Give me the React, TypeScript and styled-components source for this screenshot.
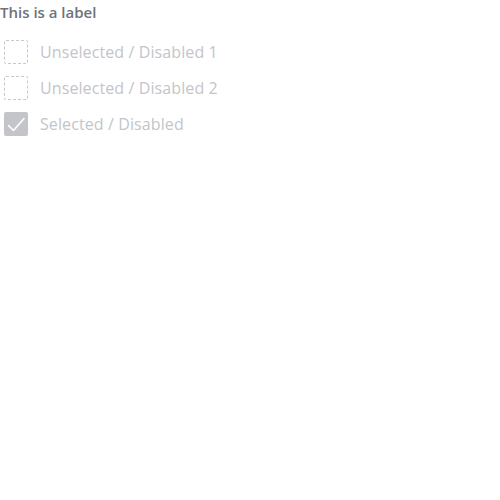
import React from "react";
import styled, { createGlobalStyle } from "styled-components";

const Global = createGlobalStyle`
  body { margin: 0; background: #fff; font-family: "Open Sans", sans-serif; }
`;

const Group = styled.div`
  display: flex;
  flex-direction: column;
`;

const Label = styled.div`
  font-size: 15px;
  font-weight: 600;
  line-height: 24px;
  color: #6e727a;
  margin-bottom: 10px;
`;

const Row = styled.label`
  display: flex;
  align-items: center;
  gap: 12px;
  height: 36px;
  padding-left: 4px;
`;

const Box = styled.span<{ $checked?: boolean }>`
  box-sizing: border-box;
  width: 24px;
  height: 24px;
  border-radius: 2px;
  display: flex;
  align-items: center;
  justify-content: center;
  border: ${(p) => (p.$checked ? "none" : "1px dashed #c6c8cd")};
  background: ${(p) => (p.$checked ? "#c3c5ca" : "transparent")};
`;

const Text = styled.span`
  font-size: 16px;
  letter-spacing: 0.1px;
  color: #c3c5ca;
`;

const Check = () => (
  <svg width="24" height="24" viewBox="0 0 24 24" fill="none">
    <path d="M4.5 13.5l5 5L20 6.5" stroke="#fff" strokeWidth="1.6" strokeLinecap="round" strokeLinejoin="round" />
  </svg>
);

export default function App() {
  return (
    <>
      <Global />
      <Group>
        <Label>This is a label</Label>
        <Row>
          <Box />
          <Text>Unselected / Disabled 1</Text>
        </Row>
        <Row>
          <Box />
          <Text>Unselected / Disabled 2</Text>
        </Row>
        <Row>
          <Box $checked>
            <Check />
          </Box>
          <Text>Selected / Disabled</Text>
        </Row>
      </Group>
    </>
  );
}
